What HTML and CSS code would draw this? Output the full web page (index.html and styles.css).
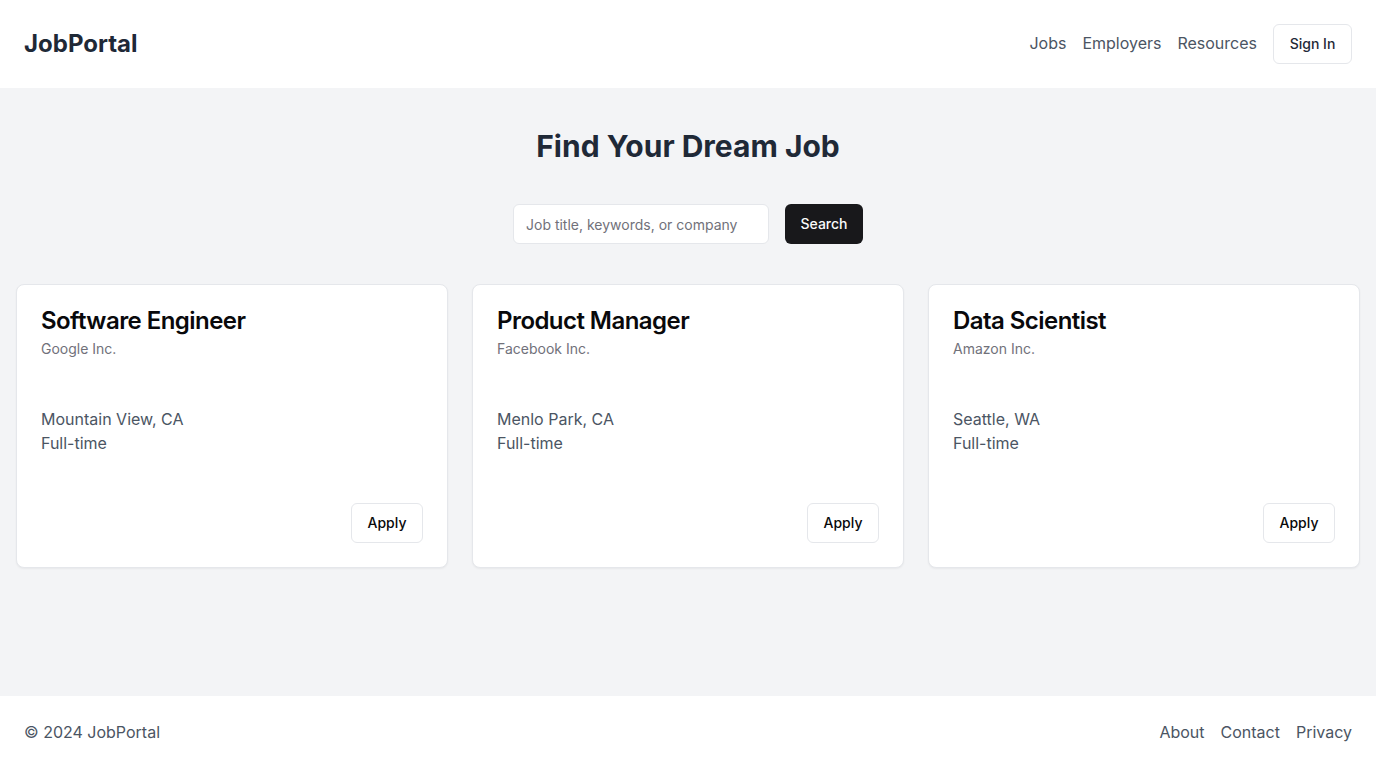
FILE: index.html
```html
<!DOCTYPE html>
<html lang="en">
<head>
<meta charset="utf-8">
<title>JobPortal</title>
<link rel="stylesheet" href="styles.css">
</head>
<body>
<div class="page">
  <header class="header">
    <div class="logo">JobPortal</div>
    <nav class="nav">
      <a class="nav-link" href="#">Jobs</a>
      <a class="nav-link" href="#">Employers</a>
      <a class="nav-link" href="#">Resources</a>
      <button class="btn btn-outline btn-signin">Sign In</button>
    </nav>
  </header>
  <main class="main">
    <h1 class="hero-title">Find Your Dream Job</h1>
    <form class="search">
      <input class="search-input" type="text" placeholder="Job title, keywords, or company">
      <button class="btn btn-dark" type="button">Search</button>
    </form>
    <section class="cards">
      <article class="card">
        <div class="card-header">
          <h2 class="card-title">Software Engineer</h2>
          <p class="card-desc">Google Inc.</p>
        </div>
        <div class="card-content">
          <p>Mountain View, CA</p>
          <p>Full-time</p>
        </div>
        <div class="card-footer">
          <button class="btn btn-outline btn-apply">Apply</button>
        </div>
      </article>
      <article class="card">
        <div class="card-header">
          <h2 class="card-title">Product Manager</h2>
          <p class="card-desc">Facebook Inc.</p>
        </div>
        <div class="card-content">
          <p>Menlo Park, CA</p>
          <p>Full-time</p>
        </div>
        <div class="card-footer">
          <button class="btn btn-outline btn-apply">Apply</button>
        </div>
      </article>
      <article class="card">
        <div class="card-header">
          <h2 class="card-title">Data Scientist</h2>
          <p class="card-desc">Amazon Inc.</p>
        </div>
        <div class="card-content">
          <p>Seattle, WA</p>
          <p>Full-time</p>
        </div>
        <div class="card-footer">
          <button class="btn btn-outline btn-apply">Apply</button>
        </div>
      </article>
    </section>
  </main>
  <footer class="footer">
    <div class="copy">© 2024 JobPortal</div>
    <nav class="footer-nav">
      <a class="nav-link" href="#">About</a>
      <a class="nav-link" href="#">Contact</a>
      <a class="nav-link" href="#">Privacy</a>
    </nav>
  </footer>
</div>
</body>
</html>
```

FILE: styles.css
```css
* { box-sizing: border-box; }
html, body { margin: 0; padding: 0; }
body {
  font-family: Inter, "Noto Sans", "Liberation Sans", sans-serif;
  color: #1f2937;
  background: #ffffff;
}
.page {
  min-height: 768px;
  display: flex;
  flex-direction: column;
}
.header {
  height: 88px;
  background: #ffffff;
  padding: 0 24px;
  display: flex;
  align-items: center;
  justify-content: space-between;
}
.logo {
  font-size: 24px;
  font-weight: 700;
  color: #1f2937;
  line-height: 32px;
}
.nav {
  display: flex;
  align-items: center;
  gap: 16px;
}
.nav .nav-link { padding-bottom: 2px; }
.nav-link {
  font-size: 16px;
  line-height: 24px;
  color: #4b5563;
  text-decoration: none;
}
.btn {
  font-family: inherit;
  font-size: 14px;
  font-weight: 500;
  height: 40px;
  border-radius: 6px;
  padding: 0 0 2px;
  cursor: pointer;
}
.btn-outline {
  background: #ffffff;
  border: 1px solid #e5e7eb;
  color: #09090b;
}
.btn-signin { color: #1f2937; width: 79px; }
.btn-dark {
  background: #18181b;
  border: none;
  color: #fafafa;
  width: 78px;
}
.main {
  flex: 1;
  background: #f3f4f6;
  padding: 40px 16px 0;
  display: flex;
  flex-direction: column;
  align-items: center;
}
.hero-title {
  margin: 0;
  font-size: 30px;
  line-height: 36px;
  font-weight: 700;
  color: #1f2937;
}
.search {
  margin: 40px 0 0;
  display: flex;
  gap: 16px;
}
.search-input {
  width: 256px;
  height: 40px;
  border: 1px solid #e5e7eb;
  border-radius: 6px;
  background: #ffffff;
  padding: 0 12px;
  font-family: inherit;
  font-size: 14px;
  color: #1f2937;
}
.search-input::placeholder { color: #71717a; }
.cards {
  margin-top: 40px;
  width: 100%;
  display: grid;
  grid-template-columns: repeat(3, 1fr);
  gap: 24px;
}
.card {
  background: #ffffff;
  border: 1px solid #e5e7eb;
  border-radius: 8px;
  box-shadow: 0 1px 2px rgba(0,0,0,0.05);
  display: flex;
  flex-direction: column;
}
.card-header {
  padding: 24px 24px 23px;
  display: flex;
  flex-direction: column;
  gap: 6px;
}
.card-title {
  margin: 0;
  font-size: 24px;
  line-height: 24px;
  font-weight: 600;
  letter-spacing: -0.55px;
  color: #09090b;
}
.card-desc {
  margin: 0;
  font-size: 14px;
  line-height: 20px;
  color: #71717a;
}
.card-content {
  padding: 25px 24px 48px;
}
.card-content p {
  margin: 0;
  font-size: 16px;
  line-height: 24px;
  color: #4b5563;
}
.card-footer {
  padding: 0 24px 24px;
  display: flex;
  justify-content: flex-end;
}
.btn-apply { width: 72px; }
.footer {
  height: 72px;
  background: #ffffff;
  padding: 0 24px;
  display: flex;
  align-items: center;
  justify-content: space-between;
}
.copy {
  font-size: 16px;
  color: #4b5563;
}
.footer-nav {
  display: flex;
  gap: 16px;
}
```
